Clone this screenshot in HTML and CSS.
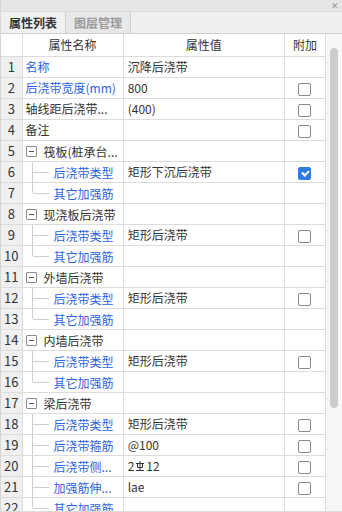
FILE: index.html
```html
<!DOCTYPE html>
<html>
<head>
<meta charset="utf-8" />
<title>属性列表</title>
<meta name="viewport" content="width=device-width, initial-scale=1">
<link rel="stylesheet" href="styles.css">
</head>

<body>
<div class="panel">
  <div class="titlebar"><span class="close">&#x2715;</span></div>

  <div class="tabs">
    <div class="tab tab-active">属性列表</div>
    <div class="tab">图层管理</div>
  </div>

  <div class="grid-wrap">
    <div class="grid-body">
      <table class="grid">
        <colgroup>
          <col class="c-num"><col class="c-name"><col class="c-val"><col class="c-add">
        </colgroup>
        <thead>
          <tr><th></th><th>属性名称</th><th>属性值</th><th>附加</th></tr>
        </thead>
        <tbody>
          <tr><td class="num">1</td><td class="name blue">名称</td><td class="val">沉降后浇带</td><td class="add"></td></tr>
          <tr><td class="num">2</td><td class="name blue">后浇带宽度(mm)</td><td class="val">800</td><td class="add"><span class="cb"></span></td></tr>
          <tr><td class="num">3</td><td class="name">轴线距后浇带...</td><td class="val">(400)</td><td class="add"><span class="cb"></span></td></tr>
          <tr><td class="num">4</td><td class="name">备注</td><td class="val"></td><td class="add"><span class="cb"></span></td></tr>

          <tr><td class="num">5</td><td class="name group"><span class="fold"></span><span class="label">筏板(桩承台...</span></td><td class="val"></td><td class="add"></td></tr>
          <tr><td class="num">6</td><td class="name child"><span class="twig"></span><span class="label blue">后浇带类型</span></td><td class="val">矩形下沉后浇带</td><td class="add"><span class="cb cb-on"></span></td></tr>
          <tr><td class="num">7</td><td class="name child"><span class="twig twig-last"></span><span class="label blue">其它加强筋</span></td><td class="val"></td><td class="add"></td></tr>

          <tr><td class="num">8</td><td class="name group"><span class="fold"></span><span class="label">现浇板后浇带</span></td><td class="val"></td><td class="add"></td></tr>
          <tr><td class="num">9</td><td class="name child"><span class="twig"></span><span class="label blue">后浇带类型</span></td><td class="val">矩形后浇带</td><td class="add"><span class="cb"></span></td></tr>
          <tr><td class="num">10</td><td class="name child"><span class="twig twig-last"></span><span class="label blue">其它加强筋</span></td><td class="val"></td><td class="add"></td></tr>

          <tr><td class="num">11</td><td class="name group"><span class="fold"></span><span class="label">外墙后浇带</span></td><td class="val"></td><td class="add"></td></tr>
          <tr><td class="num">12</td><td class="name child"><span class="twig"></span><span class="label blue">后浇带类型</span></td><td class="val">矩形后浇带</td><td class="add"><span class="cb"></span></td></tr>
          <tr><td class="num">13</td><td class="name child"><span class="twig twig-last"></span><span class="label blue">其它加强筋</span></td><td class="val"></td><td class="add"></td></tr>

          <tr><td class="num">14</td><td class="name group"><span class="fold"></span><span class="label">内墙后浇带</span></td><td class="val"></td><td class="add"></td></tr>
          <tr><td class="num">15</td><td class="name child"><span class="twig"></span><span class="label blue">后浇带类型</span></td><td class="val">矩形后浇带</td><td class="add"><span class="cb"></span></td></tr>
          <tr><td class="num">16</td><td class="name child"><span class="twig twig-last"></span><span class="label blue">其它加强筋</span></td><td class="val"></td><td class="add"></td></tr>

          <tr><td class="num">17</td><td class="name group"><span class="fold"></span><span class="label">梁后浇带</span></td><td class="val"></td><td class="add"></td></tr>
          <tr><td class="num">18</td><td class="name child"><span class="twig"></span><span class="label blue">后浇带类型</span></td><td class="val">矩形后浇带</td><td class="add"><span class="cb"></span></td></tr>
          <tr><td class="num">19</td><td class="name child"><span class="twig"></span><span class="label blue">后浇带箍筋</span></td><td class="val">@100</td><td class="add"><span class="cb"></span></td></tr>
          <tr><td class="num">20</td><td class="name child"><span class="twig"></span><span class="label blue">后浇带侧...</span></td><td class="val">2<svg class="steel" viewBox="0 0 10 12" width="10" height="12"><path d="M1 3.5H9M2.5 3.5V7.5H7.5V3.5M1 10.5H9M5 1V10.5" fill="none" stroke="#333" stroke-width="1"/></svg>12</td><td class="add"><span class="cb"></span></td></tr>
          <tr><td class="num">21</td><td class="name child"><span class="twig"></span><span class="label blue">加强筋伸...</span></td><td class="val">lae</td><td class="add"><span class="cb"></span></td></tr>
          <tr><td class="num">22</td><td class="name child"><span class="twig twig-last"></span><span class="label blue">其它加强筋</span></td><td class="val"></td><td class="add"></td></tr>
        </tbody>
      </table>
    </div>
    <div class="scrollbar"><div class="thumb"></div></div>
  </div>
</div>
</body>
</html>
```

FILE: styles.css
```css
html, body {
  margin: 0;
  padding: 0;
  background: #fff;
}

body {
  font-family: "Noto Sans CJK SC", "Noto Sans", sans-serif;
  font-size: 12px;
  color: #333;
}

.panel {
  width: 342px;
  height: 512px;
  display: flex;
  flex-direction: column;
  overflow: hidden;
  box-sizing: border-box;
  border-left: 1px solid #d6d6d6;
}

.titlebar {
  height: 11px;
  flex: none;
  background: #e6e6e6;
  display: flex;
  justify-content: flex-end;
  align-items: center;
  padding-right: 3px;
}

.close {
  font-size: 9px;
  line-height: 9px;
  color: #9a9a9a;
}

.tabs {
  height: 23px;
  flex: none;
  background: #efefef;
  display: flex;
  box-sizing: border-box;
  border-top: 1px solid #dcdcdc;
  border-bottom: 1px solid #d0d0d0;
}

.tab {
  padding: 0 8px;
  line-height: 21px;
  font-size: 12px;
  font-weight: bold;
  color: #999;
  background: #e8e8e8;
  border-right: 1px solid #d0d0d0;
}

.tab-active {
  color: #333;
  background: #f0f0f0;
}

.grid-wrap {
  flex: 1;
  display: flex;
  min-height: 0;
  border-bottom: 1px solid #dcdcdc;
}

.grid-body {
  flex: 1;
  overflow: hidden;
}

.grid {
  width: 325px;
  table-layout: fixed;
  border-collapse: collapse;
}

.c-num { width: 21px; }
.c-name { width: 101px; }
.c-val { width: 161px; }
.c-add { width: 41px; }

.grid th, .grid td {
  border: 1px solid #dcdcdc;
  height: 21px;
  padding: 0;
  white-space: nowrap;
  overflow: hidden;
  box-sizing: border-box;
}

.grid tr:first-child th,
.grid tr:first-child td {
  border-top: none;
}

.grid th:first-child,
.grid td:first-child {
  border-left: none;
}

.grid th {
  height: 22px;
  font-weight: normal;
  text-align: center;
  color: #333;
}

.num {
  background: #f0f0f0;
  text-align: center;
  font-size: 13px;
}

.name {
  padding-left: 3px !important;
}

.val {
  padding-left: 4px !important;
}

.blue {
  color: #2c64e0;
}

.group, .child {
  position: relative;
}

.label {
  display: inline-block;
  vertical-align: middle;
}

.group .label {
  margin-left: 7px;
}

.child .label {
  margin-left: 28px;
}

.fold {
  display: inline-block;
  vertical-align: middle;
  width: 11px;
  height: 11px;
  box-sizing: border-box;
  border: 1px solid #8c8c8c;
  border-radius: 1px;
  position: relative;
}

.fold::after {
  content: "";
  position: absolute;
  left: 2px;
  right: 2px;
  top: 4px;
  height: 1px;
  background: #555;
}

/* tree connector lines */
.twig {
  position: absolute;
  left: 9px;
  top: 0;
  bottom: 0;
  width: 16px;
  border-left: 1px solid #cfcfcf;
}

.twig::after {
  content: "";
  position: absolute;
  left: 0;
  right: 0;
  top: 50%;
  border-top: 1px solid #cfcfcf;
}

.twig-last {
  bottom: 50%;
}

.twig-last::after {
  top: 100%;
}

.add {
  text-align: center;
}

.cb {
  display: inline-block;
  vertical-align: middle;
  width: 13px;
  height: 13px;
  box-sizing: border-box;
  border: 1px solid #8a8a8a;
  border-radius: 2px;
  background: #fff;
  position: relative;
}

.cb-on {
  background: #2f7be6;
  border-color: #2f7be6;
}

.cb-on::after {
  content: "";
  position: absolute;
  left: 3px;
  top: 2px;
  width: 5px;
  height: 3px;
  border-left: 2px solid #fff;
  border-bottom: 2px solid #fff;
  transform: rotate(-45deg);
}

.steel {
  vertical-align: -1px;
  margin: 0 1px;
}

.scrollbar {
  width: 17px;
  background: #f7f7f7;
  border-left: 1px solid #dcdcdc;
  box-sizing: border-box;
  padding: 14px 4px 0 4px;
}

.thumb {
  height: 360px;
  background: #cdcdcd;
  border-radius: 4px;
}
```
